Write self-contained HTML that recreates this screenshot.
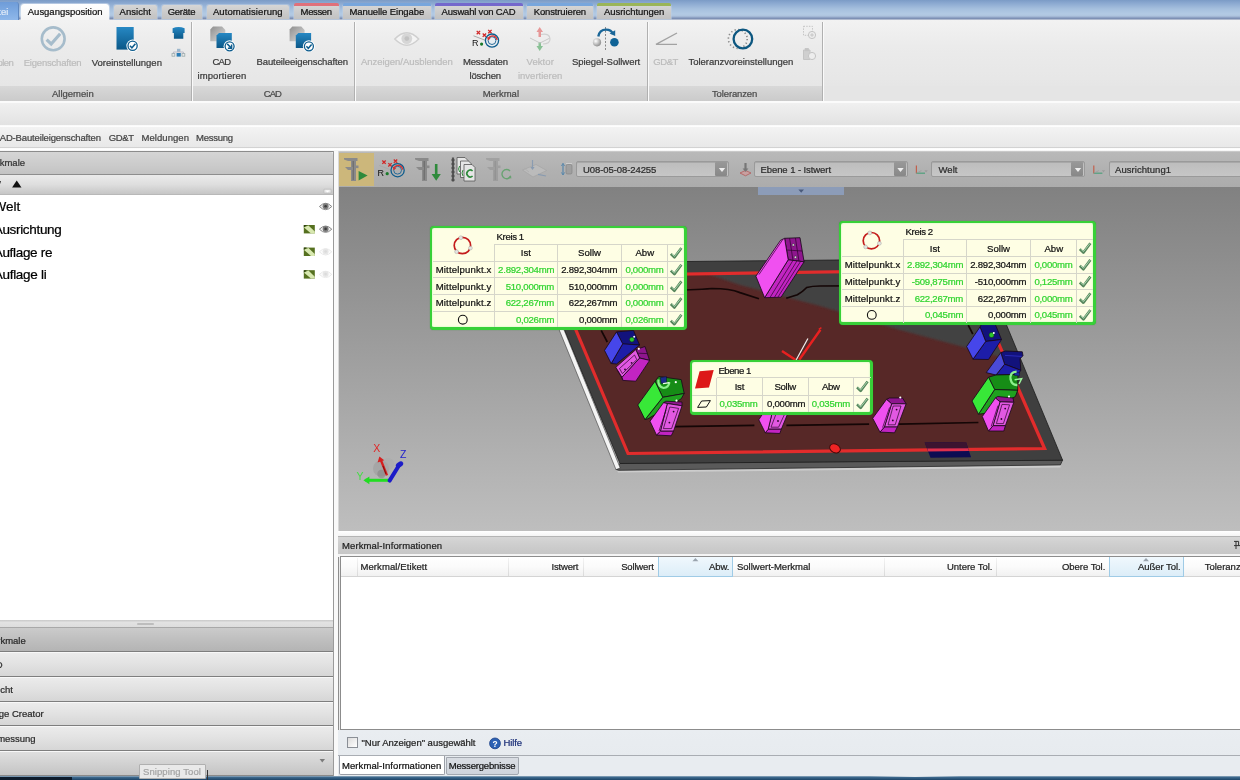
<!DOCTYPE html>
<html lang="de">
<head>
<meta charset="utf-8">
<title>Messung</title>
<style>
html,body{margin:0;padding:0;}
body{width:1240px;height:780px;overflow:hidden;position:relative;background:#ececec;font-family:"Liberation Sans","DejaVu Sans",sans-serif;font-size:9.5px;color:#222;}
.a{position:absolute;}
.t{position:absolute;white-space:nowrap;display:block;-webkit-text-stroke:.22px currentColor;}
#w{position:absolute;left:0;top:0;width:1240px;height:780px;overflow:hidden;opacity:.999;}
svg{position:absolute;left:0;top:0;overflow:visible;}
</style>
</head>
<body>
<div id="w">
<!-- p1_top -->
<div class="a" style="left:0px;top:0px;width:1240px;height:20px;background:linear-gradient(#7b9bc6 0,#8aa8d0 3px,#a6c0de 9px,#b2cae4 14px,#aec4de 16px,#8ea2c4 17.5px,#7d90b4 18.5px,#c9cfdb 20px);"></div>
<div class="a" style="left:0px;top:2px;width:18px;height:18px;background:linear-gradient(#6e9cd8,#7eaae2 50%,#8fb8ea);border-radius:0 3px 0 0;border-right:1px solid #5f88c0;"></div>
<span class="t" style="left:-14.2px;top:6.8px;font-size:9.5px;line-height:9.5px;letter-spacing:0.11px;color:#dfeaf8;">Datei</span>
<div class="a" style="left:21px;top:4px;width:88px;height:17px;background:linear-gradient(#ffffff,#f4f4f4);border-radius:3px 3px 0 0;box-shadow:0 0 0 1px rgba(255,255,255,.35);"></div>
<span class="t" style="left:27.8px;top:6.8px;font-size:9.5px;line-height:9.5px;letter-spacing:-0.02px;color:#111;">Ausgangsposition</span>
<div class="a" style="left:114px;top:5px;width:43px;height:14px;background:linear-gradient(#d6d6d6,#c9c9c9 60%,#c2c2c2);border-radius:2px 2px 0 0;box-shadow:0 0 0 1px rgba(190,205,225,.55);"></div>
<span class="t" style="left:119.6px;top:6.8px;font-size:9.5px;line-height:9.5px;letter-spacing:0.04px;color:#111;">Ansicht</span>
<div class="a" style="left:162px;top:5px;width:40px;height:14px;background:linear-gradient(#d6d6d6,#c9c9c9 60%,#c2c2c2);border-radius:2px 2px 0 0;box-shadow:0 0 0 1px rgba(190,205,225,.55);"></div>
<span class="t" style="left:167.7px;top:6.8px;font-size:9.5px;line-height:9.5px;letter-spacing:-0.25px;color:#111;">Geräte</span>
<div class="a" style="left:207px;top:5px;width:82px;height:14px;background:linear-gradient(#d6d6d6,#c9c9c9 60%,#c2c2c2);border-radius:2px 2px 0 0;box-shadow:0 0 0 1px rgba(190,205,225,.55);"></div>
<span class="t" style="left:212.9px;top:6.8px;font-size:9.5px;line-height:9.5px;letter-spacing:0.08px;color:#111;">Automatisierung</span>
<div class="a" style="left:294px;top:5px;width:45px;height:14px;background:linear-gradient(#d6d6d6,#c9c9c9 60%,#c2c2c2);border-radius:2px 2px 0 0;box-shadow:0 0 0 1px rgba(190,205,225,.55);"></div>
<div class="a" style="left:294px;top:3px;width:45px;height:2.5px;background:#e0707a;border-radius:2px 2px 0 0;"></div>
<span class="t" style="left:300.6px;top:6.8px;font-size:9.5px;line-height:9.5px;letter-spacing:-0.37px;color:#111;">Messen</span>
<div class="a" style="left:343px;top:5px;width:88px;height:14px;background:linear-gradient(#d6d6d6,#c9c9c9 60%,#c2c2c2);border-radius:2px 2px 0 0;box-shadow:0 0 0 1px rgba(190,205,225,.55);"></div>
<div class="a" style="left:343px;top:3px;width:88px;height:2.5px;background:#78a6dc;border-radius:2px 2px 0 0;"></div>
<span class="t" style="left:349.4px;top:6.8px;font-size:9.5px;line-height:9.5px;letter-spacing:-0.08px;color:#111;">Manuelle Eingabe</span>
<div class="a" style="left:435px;top:5px;width:88px;height:14px;background:linear-gradient(#d6d6d6,#c9c9c9 60%,#c2c2c2);border-radius:2px 2px 0 0;box-shadow:0 0 0 1px rgba(190,205,225,.55);"></div>
<div class="a" style="left:435px;top:3px;width:88px;height:2.5px;background:#7468cc;border-radius:2px 2px 0 0;"></div>
<span class="t" style="left:441.6px;top:6.8px;font-size:9.5px;line-height:9.5px;letter-spacing:-0.19px;color:#111;">Auswahl von CAD</span>
<div class="a" style="left:527px;top:5px;width:66px;height:14px;background:linear-gradient(#d6d6d6,#c9c9c9 60%,#c2c2c2);border-radius:2px 2px 0 0;box-shadow:0 0 0 1px rgba(190,205,225,.55);"></div>
<div class="a" style="left:527px;top:3px;width:66px;height:2.5px;background:#78a6dc;border-radius:2px 2px 0 0;"></div>
<span class="t" style="left:533.7px;top:6.8px;font-size:9.5px;line-height:9.5px;letter-spacing:-0.13px;color:#111;">Konstruieren</span>
<div class="a" style="left:597px;top:5px;width:74px;height:14px;background:linear-gradient(#d6d6d6,#c9c9c9 60%,#c2c2c2);border-radius:2px 2px 0 0;box-shadow:0 0 0 1px rgba(190,205,225,.55);"></div>
<div class="a" style="left:597px;top:3px;width:74px;height:2.5px;background:#9ab558;border-radius:2px 2px 0 0;"></div>
<span class="t" style="left:603.9px;top:6.8px;font-size:9.5px;line-height:9.5px;letter-spacing:-0.02px;color:#111;">Ausrichtungen</span>
<div class="a" style="left:0px;top:20px;width:1240px;height:66px;background:linear-gradient(#f2f2f2,#ebebeb 40%,#e6e6e6);"></div>
<div class="a" style="left:0px;top:86px;width:823px;height:15px;background:linear-gradient(#d8d8d8,#d0d0d0 60%,#cbcbcb);"></div>
<div class="a" style="left:823px;top:86px;width:417px;height:15px;background:#e5e5e5;"></div>
<div class="a" style="left:191px;top:22px;width:1px;height:79px;background:#b0b0b0;box-shadow:1px 0 0 #fafafa;"></div>
<div class="a" style="left:354px;top:22px;width:1px;height:79px;background:#b0b0b0;box-shadow:1px 0 0 #fafafa;"></div>
<div class="a" style="left:647px;top:22px;width:1px;height:79px;background:#b0b0b0;box-shadow:1px 0 0 #fafafa;"></div>
<div class="a" style="left:822px;top:22px;width:1px;height:79px;background:#b0b0b0;box-shadow:1px 0 0 #fafafa;"></div>
<span class="t" style="left:51.9px;top:89.3px;font-size:9.5px;line-height:9.5px;letter-spacing:0.02px;color:#4a4a4a;">Allgemein</span>
<span class="t" style="left:263.7px;top:89.3px;font-size:9.5px;line-height:9.5px;letter-spacing:-0.88px;color:#4a4a4a;">CAD</span>
<span class="t" style="left:482.7px;top:89.3px;font-size:9.5px;line-height:9.5px;letter-spacing:-0.02px;color:#4a4a4a;">Merkmal</span>
<span class="t" style="left:712.0px;top:89.3px;font-size:9.5px;line-height:9.5px;letter-spacing:-0.13px;color:#4a4a4a;">Toleranzen</span>
<span class="t" style="left:-34.0px;top:57.6px;font-size:9.5px;line-height:9.5px;letter-spacing:-0.56px;color:#bcbcbc;">Wiederholen</span>
<span class="t" style="left:23.7px;top:57.6px;font-size:9.5px;line-height:9.5px;letter-spacing:-0.20px;color:#bcbcbc;">Eigenschaften</span>
<span class="t" style="left:91.7px;top:57.6px;font-size:9.5px;line-height:9.5px;letter-spacing:0.00px;color:#3a3a3a;">Voreinstellungen</span>
<span class="t" style="left:212.4px;top:57.3px;font-size:9.5px;line-height:9.5px;letter-spacing:-0.73px;color:#3a3a3a;">CAD</span>
<span class="t" style="left:197.4px;top:70.5px;font-size:9.5px;line-height:9.5px;letter-spacing:0.14px;color:#3a3a3a;">importieren</span>
<span class="t" style="left:256.5px;top:57.3px;font-size:9.5px;line-height:9.5px;letter-spacing:-0.10px;color:#3a3a3a;">Bauteileeigenschaften</span>
<span class="t" style="left:361.0px;top:57.3px;font-size:9.5px;line-height:9.5px;letter-spacing:-0.03px;color:#bcbcbc;">Anzeigen/Ausblenden</span>
<span class="t" style="left:462.9px;top:57.3px;font-size:9.5px;line-height:9.5px;letter-spacing:-0.17px;color:#3a3a3a;">Messdaten</span>
<span class="t" style="left:469.5px;top:70.5px;font-size:9.5px;line-height:9.5px;letter-spacing:-0.21px;color:#3a3a3a;">löschen</span>
<span class="t" style="left:526.5px;top:57.3px;font-size:9.5px;line-height:9.5px;letter-spacing:0.09px;color:#bcbcbc;">Vektor</span>
<span class="t" style="left:518.0px;top:70.5px;font-size:9.5px;line-height:9.5px;letter-spacing:-0.01px;color:#bcbcbc;">invertieren</span>
<span class="t" style="left:571.9px;top:57.3px;font-size:9.5px;line-height:9.5px;letter-spacing:-0.02px;color:#3a3a3a;">Spiegel-Sollwert</span>
<span class="t" style="left:653.2px;top:57.3px;font-size:9.5px;line-height:9.5px;letter-spacing:-0.40px;color:#bcbcbc;">GD&amp;T</span>
<span class="t" style="left:688.4px;top:57.3px;font-size:9.5px;line-height:9.5px;letter-spacing:-0.01px;color:#3a3a3a;">Toleranzvoreinstellungen</span>
<div class="a" style="left:0px;top:101px;width:1240px;height:1.6px;background:#fbfbfb;"></div>
<div class="a" style="left:0px;top:102.6px;width:1240px;height:22px;background:linear-gradient(#f0f0f0,#e8e8e8 60%,#e2e2e2);"></div>
<div class="a" style="left:0px;top:124.5px;width:1240px;height:2px;background:linear-gradient(#f8f8f8,#ffffff);"></div>
<div class="a" style="left:0px;top:126.5px;width:1240px;height:21px;background:linear-gradient(#f3f3f3,#ececec 60%,#e8e8e8);"></div>
<div class="a" style="left:0px;top:147px;width:1240px;height:1px;background:#d2d2d2;"></div>
<div class="a" style="left:0px;top:148px;width:1240px;height:3px;background:linear-gradient(#fafafa,#ffffff 50%,#f2f2f2);"></div>
<span class="t" style="left:-7.0px;top:133.2px;font-size:9.5px;line-height:9.5px;letter-spacing:-0.15px;color:#444;">CAD-Bauteileigenschaften</span>
<span class="t" style="left:108.7px;top:133.2px;font-size:9.5px;line-height:9.5px;letter-spacing:-0.36px;color:#444;">GD&amp;T</span>
<span class="t" style="left:141.5px;top:133.2px;font-size:9.5px;line-height:9.5px;letter-spacing:0.06px;color:#444;">Meldungen</span>
<span class="t" style="left:196.0px;top:133.2px;font-size:9.5px;line-height:9.5px;letter-spacing:-0.26px;color:#444;">Messung</span>
<!-- p2_icons -->
<svg width="1240" height="110" viewBox="0 0 1240 110">
<defs>
<linearGradient id="gb" x1="0" y1="0" x2="0" y2="1"><stop offset="0" stop-color="#2688c4"/><stop offset="1" stop-color="#0b5888"/></linearGradient>
<linearGradient id="gg" x1="0" y1="0" x2="1" y2="1"><stop offset="0" stop-color="#8e8e8e"/><stop offset="1" stop-color="#dedede"/></linearGradient>
<radialGradient id="gs" cx=".35" cy=".35" r=".7"><stop offset="0" stop-color="#ffffff"/><stop offset="1" stop-color="#8c8c8c"/></radialGradient>
</defs>
<circle cx="53.2" cy="38.8" r="11.4" fill="none" stroke="#a6bccb" stroke-width="2.6"/>
<path d="M46.6 39.6 L51.2 44 L60.2 33.8" fill="none" stroke="#a6bccb" stroke-width="3.2"/>
<rect x="116.5" y="27" width="17.2" height="22.6" fill="url(#gb)"/>
<circle cx="132.6" cy="45.8" r="6.2" fill="#fff"/><circle cx="132.6" cy="45.8" r="4.6" fill="#fff" stroke="#0d5c8d" stroke-width="1.3"/>
<path d="M130 45.8 L131.9 47.8 L135.4 43.8" fill="none" stroke="#0d5c8d" stroke-width="1.5"/>
<path d="M172.6 28.2 Q178.5 26 184.6 28.2 L184.6 33 L183.3 33 L183.3 38.8 L173.9 38.8 L173.9 33 L172.6 33 Z" fill="url(#gb)"/>
<rect x="177" y="48.8" width="3.4" height="3" fill="#9db7cc"/><rect x="176.6" y="53" width="4.2" height="3.6" fill="#2b7db5"/><rect x="172" y="53.6" width="2.8" height="2.6" fill="none" stroke="#9aa" stroke-width=".8"/><rect x="182" y="53.6" width="2.8" height="2.6" fill="none" stroke="#9aa" stroke-width=".8"/><path d="M173.4 53.6V52H183.4V53.6" fill="none" stroke="#aab" stroke-width=".7"/>
<g transform="translate(0 0)"><path d="M213 26.6 H222 L225.3 30 V41.2 H210.3 V29.4Z" fill="url(#gg)"/><path d="M219 33 H231.8 V48 H216.5 V35.6Z" fill="url(#gb)"/><circle cx="229.6" cy="46.3" r="6" fill="#fff"/><circle cx="229.6" cy="46.3" r="4.5" fill="#fff" stroke="#0d5c8d" stroke-width="1.3"/><path d="M227.2 43.9 L231 47.7 M231.6 44.6 L231.6 48.3 L227.9 48.3" fill="none" stroke="#0d5c8d" stroke-width="1.5"/></g>
<g transform="translate(79.3 0)"><path d="M213 26.6 H222 L225.3 30 V41.2 H210.3 V29.4Z" fill="url(#gg)"/><path d="M219 33 H231.8 V48 H216.5 V35.6Z" fill="url(#gb)"/><circle cx="229.6" cy="46.3" r="6" fill="#fff"/><circle cx="229.6" cy="46.3" r="4.5" fill="#fff" stroke="#0d5c8d" stroke-width="1.3"/><path d="M227.1 46.3 L229 48.3 L232.3 44.4" fill="none" stroke="#0d5c8d" stroke-width="1.5"/></g>
<path d="M394.8 39 Q406.8 26.5 418.7 39 Q406.8 51.5 394.8 39Z" fill="#f4f4f4" stroke="#cfcfcf" stroke-width="1.4"/><circle cx="406.8" cy="38.6" r="5.4" fill="#d6d6d6"/><circle cx="406.8" cy="38.6" r="2.4" fill="#c2c2c2"/>
<g transform="translate(0 0)"><path d="M473.5 35.8 L485 40.2" stroke="#aaa" stroke-width="1"/><path d="M476.7 30.900000000000002L480.09999999999997 34.300000000000004M480.09999999999997 30.900000000000002L476.7 34.300000000000004" stroke="#d02828" stroke-width="1.3"/><path d="M482.7 33.5L486.09999999999997 36.900000000000006M486.09999999999997 33.5L482.7 36.900000000000006" stroke="#d02828" stroke-width="1.3"/><path d="M488.2 29.900000000000002L491.59999999999997 33.300000000000004M491.59999999999997 29.900000000000002L488.2 33.300000000000004" stroke="#d02828" stroke-width="1.3"/><text x="472" y="46" font-size="9" fill="#111" font-family="Liberation Sans,sans-serif">R</text><circle cx="481.6" cy="44.1" r="1.6" fill="#1a7a2a"/><circle cx="492" cy="40.6" r="6.6" fill="#e8eef2" stroke="#0d5c8d" stroke-width="1.3"/><circle cx="492" cy="40.6" r="3.9" fill="none" stroke="#2a6c98" stroke-width="1"/><path d="M488.2 38.6 Q490 35.6 493.2 35.8 Q496.6 36.4 497 40" fill="none" stroke="#d83030" stroke-width="1.3"/><path d="M487 37 L488 40.6 L490.6 38.6Z" fill="#d83030"/></g>
<g opacity=".55"><path d="M539.7 27 L536.5 32 L538.5 32 L538.5 37 L541 37 L541 32 L543 32Z" fill="#e05050"/><path d="M539.7 51 L536.5 46 L538.5 46 L538.5 42 L541 42 L541 46 L543 46Z" fill="#3aa050"/><path d="M530 38 L540 43 L550 38" fill="none" stroke="#aaa" stroke-width="1"/><path d="M541 34.5 Q550 33 550 39 Q550 44 543 44" fill="none" stroke="#b8b8b8" stroke-width="1.2"/></g>
<path d="M605.5 27 V51.5" stroke="#8a8a8a" stroke-width="1" stroke-dasharray="2 1.5"/><path d="M598.3 36.5 Q599.5 29.6 606 29.6 Q611.5 29.6 613 34" fill="none" stroke="#1a6698" stroke-width="2.4"/><path d="M609.6 33.4 L615.2 36 L615.2 30.2Z" fill="#1a6698"/><circle cx="597" cy="42.3" r="4.1" fill="url(#gs)"/><circle cx="614.4" cy="42.3" r="4.3" fill="#0f6396"/>
<path d="M677 33 L656 44.4 L677 44.4" fill="none" stroke="#a2a2a2" stroke-width="1.4"/>
<circle cx="737.8" cy="39" r="9.4" fill="none" stroke="#8a8a8a" stroke-width="1.6" stroke-dasharray="1.3 2.4"/><circle cx="742.9" cy="39" r="9.3" fill="none" stroke="#0d5780" stroke-width="2.3"/>
<g fill="none" stroke="#c4c4c4" stroke-width="1"><rect x="803.5" y="26.3" width="9" height="9" stroke-dasharray="1.5 1.2"/><circle cx="812" cy="35" r="3.6" fill="#ededed"/><path d="M810.2 35H813.8M812 33.2V36.8"/><path d="M803.5 50 H810 V59.5 H803.5Z" fill="#cfcfcf"/><rect x="805.3" y="48.6" width="3" height="2" fill="#c4c4c4"/><circle cx="812" cy="56" r="3.6" fill="#ededed"/></g>
</svg>
<!-- p3_left -->
<div class="a" style="left:0px;top:150.5px;width:333px;height:1px;background:#8c8c8c;"></div>
<div class="a" style="left:0px;top:151.5px;width:333px;height:22px;background:linear-gradient(#d5d5d5,#cbcbcb 60%,#c3c3c3);border-radius:0 3px 0 0;"></div>
<div class="a" style="left:333px;top:151px;width:1px;height:625px;background:#9a9a9a;"></div>
<div class="a" style="left:334px;top:151px;width:4px;height:625px;background:#f9f9f9;"></div>
<div class="a" style="left:0px;top:173.5px;width:333px;height:1px;background:#8e8e8e;"></div>
<span class="t" style="left:-16.5px;top:158.0px;font-size:9.5px;line-height:9.5px;letter-spacing:-0.03px;color:#333;">Merkmale</span>
<div class="a" style="left:0px;top:174.5px;width:333px;height:19px;background:linear-gradient(#ebebeb,#dedede 50%,#c6c6c6);"></div>
<div class="a" style="left:0px;top:193.5px;width:333px;height:1px;background:#b8b8b8;"></div>
<div class="a" style="left:0px;top:194.5px;width:333px;height:425px;background:#ffffff;"></div>
<span class="t" style="left:-6.5px;top:200.4px;font-size:13.5px;line-height:13.5px;letter-spacing:0.00px;color:#000;">Welt</span>
<span class="t" style="left:-6.3px;top:223.2px;font-size:13.5px;line-height:13.5px;letter-spacing:-0.32px;color:#000;">Ausrichtung</span>
<span class="t" style="left:-6.3px;top:246.0px;font-size:13.5px;line-height:13.5px;letter-spacing:-0.31px;color:#000;">Auflage re</span>
<span class="t" style="left:-6.3px;top:267.9px;font-size:13.5px;line-height:13.5px;letter-spacing:-0.28px;color:#000;">Auflage li</span>
<div class="a" style="left:0px;top:619.5px;width:333px;height:8px;background:linear-gradient(#c8c8c8,#e2e2e2 30%,#dcdcdc);"></div>
<div class="a" style="left:137px;top:623px;width:17px;height:2px;background:#bdbdbd;border-radius:1px;"></div>
<div class="a" style="left:0px;top:627.4px;width:333px;height:24px;background:linear-gradient(#cbcbcb,#bfbfbf 50%,#b4b4b4);border-top:1px solid #a8a8a8;box-sizing:border-box;"></div>
<div class="a" style="left:0px;top:651.3px;width:333px;height:24.6px;background:linear-gradient(#ececec,#e2e2e2 50%,#d6d6d6);border-top:1px solid #7e7e7e;box-sizing:border-box;box-shadow:inset 0 1px 0 #f8f8f8;"></div>
<div class="a" style="left:0px;top:676px;width:333px;height:24.6px;background:linear-gradient(#ececec,#e2e2e2 50%,#d6d6d6);border-top:1px solid #7e7e7e;box-sizing:border-box;box-shadow:inset 0 1px 0 #f8f8f8;"></div>
<div class="a" style="left:0px;top:700.6px;width:333px;height:24.6px;background:linear-gradient(#ececec,#e2e2e2 50%,#d6d6d6);border-top:1px solid #7e7e7e;box-sizing:border-box;box-shadow:inset 0 1px 0 #f8f8f8;"></div>
<div class="a" style="left:0px;top:725.3px;width:333px;height:24.6px;background:linear-gradient(#ececec,#e2e2e2 50%,#d6d6d6);border-top:1px solid #7e7e7e;box-sizing:border-box;box-shadow:inset 0 1px 0 #f8f8f8;"></div>
<div class="a" style="left:0px;top:750px;width:333px;height:24.6px;background:linear-gradient(#e0e0e0,#d2d2d2 50%,#c4c4c4);border-top:1px solid #7e7e7e;box-sizing:border-box;box-shadow:inset 0 1px 0 #f8f8f8;"></div>
<div class="a" style="left:0px;top:774.5px;width:333px;height:1.5px;background:#8a8a8a;"></div>
<span class="t" style="left:-15.8px;top:635.9px;font-size:9.5px;line-height:9.5px;letter-spacing:-0.03px;color:#2a2a2a;">Merkmale</span>
<span class="t" style="left:-15.0px;top:660.2px;font-size:9.5px;line-height:9.5px;letter-spacing:-1.23px;color:#2a2a2a;">CAD</span>
<span class="t" style="left:-18.0px;top:684.8px;font-size:9.5px;line-height:9.5px;letter-spacing:-0.03px;color:#2a2a2a;">Ansicht</span>
<span class="t" style="left:-17.0px;top:709.4px;font-size:9.5px;line-height:9.5px;letter-spacing:-0.01px;color:#2a2a2a;">Image Creator</span>
<span class="t" style="left:-17.0px;top:734.0px;font-size:9.5px;line-height:9.5px;letter-spacing:-0.04px;color:#2a2a2a;">Vermessung</span>
<div class="a" style="left:138.5px;top:764px;width:67.5px;height:15.4px;z-index:5;background:#e9e9e9;border:1px solid #b0b0b0;box-sizing:border-box;border-radius:1px;"></div>
<span class="t" style="left:143.0px;top:766.8px;font-size:9.5px;line-height:9.5px;letter-spacing:0.09px;color:#a4a4a4;z-index:6;">Snipping Tool</span>
<div class="a" style="left:206.6px;top:769.5px;width:1.2px;height:10.5px;background:#333;z-index:6;"></div>
<svg width="340" height="780" viewBox="0 0 340 780">
<path d="M12.1 187.4 L16.7 180.5 L21.5 187.4Z" fill="#111"/><path d="M-0.5 181 L1 181 L0.2 184Z" fill="#333"/>
<path d="M324 189.2 H331 V193 H324Z" fill="#e8e8e8" stroke="#b5b5b5" stroke-width=".6"/><path d="M325.4 190.4 H329.6 L327.5 192.4Z" fill="#fff"/>
<g opacity="1"><path d="M319.40000000000003 206.5 Q325.6 200.1 331.8 206.5 Q325.6 212.9 319.40000000000003 206.5Z" fill="#f2f2f2" stroke="#8a8a8a" stroke-width="1"/><circle cx="325.6" cy="206.2" r="3" fill="#7c7c7c"/><circle cx="325.6" cy="206.2" r="1.3" fill="#3c3c3c"/></g>
<g opacity="1"><path d="M319.40000000000003 229.2 Q325.6 222.79999999999998 331.8 229.2 Q325.6 235.6 319.40000000000003 229.2Z" fill="#f2f2f2" stroke="#8a8a8a" stroke-width="1"/><circle cx="325.6" cy="228.89999999999998" r="3" fill="#7c7c7c"/><circle cx="325.6" cy="228.89999999999998" r="1.3" fill="#3c3c3c"/></g>
<g opacity="0.18"><path d="M319.40000000000003 251.8 Q325.6 245.4 331.8 251.8 Q325.6 258.2 319.40000000000003 251.8Z" fill="#f2f2f2" stroke="#8a8a8a" stroke-width="1"/><circle cx="325.6" cy="251.5" r="3" fill="#7c7c7c"/><circle cx="325.6" cy="251.5" r="1.3" fill="#3c3c3c"/></g>
<g opacity="0.18"><path d="M319.40000000000003 274.4 Q325.6 268.0 331.8 274.4 Q325.6 280.79999999999995 319.40000000000003 274.4Z" fill="#f2f2f2" stroke="#8a8a8a" stroke-width="1"/><circle cx="325.6" cy="274.09999999999997" r="3" fill="#7c7c7c"/><circle cx="325.6" cy="274.09999999999997" r="1.3" fill="#3c3c3c"/></g>
<rect x="303.8" y="225" width="11" height="8.4" fill="#55701f"/><path d="M303.8 227.2 L308.5 225.4 L314.8 231.5 L314.8 233.4 L311 233.4Z" fill="#d8e8b0"/><path d="M303.8 225 h3 l-3 2.5z" fill="#2e4210"/>
<rect x="303.8" y="247.6" width="11" height="8.4" fill="#55701f"/><path d="M303.8 249.79999999999998 L308.5 248.0 L314.8 254.1 L314.8 256.0 L311 256.0Z" fill="#d8e8b0"/><path d="M303.8 247.6 h3 l-3 2.5z" fill="#2e4210"/>
<rect x="303.8" y="270.2" width="11" height="8.4" fill="#55701f"/><path d="M303.8 272.4 L308.5 270.59999999999997 L314.8 276.7 L314.8 278.59999999999997 L311 278.59999999999997Z" fill="#d8e8b0"/><path d="M303.8 270.2 h3 l-3 2.5z" fill="#2e4210"/>
<path d="M319.6 759 H325 L322.3 762.4Z" fill="#7a7a7a"/>
</svg>
<!-- p4_view -->
<div class="a" style="left:338px;top:151px;width:902px;height:1px;background:#c9c9c9;"></div>
<div class="a" style="left:338px;top:152px;width:902px;height:34.5px;background:linear-gradient(#b9b9b9,#b1b1b1 50%,#acacac);"></div>
<div class="a" style="left:338px;top:151px;width:1px;height:380px;background:#d8d8d8;"></div>
<div class="a" style="left:339px;top:152.5px;width:35px;height:33.5px;background:#ccb77b;"></div>
<div class="a" style="left:339px;top:186.5px;width:901px;height:344px;background:linear-gradient(#818181 0,#8d8d8d 20%,#9f9f9f 50%,#b2b2b2 80%,#bebebe 100%);"></div>
<div class="a" style="left:338px;top:530.5px;width:902px;height:5.5px;background:linear-gradient(#ffffff,#f4f4f4);"></div>
<div class="a" style="left:576px;top:160.6px;width:152.70000000000005px;height:16.8px;box-sizing:border-box;background:linear-gradient(#bdbdbd,#c6c6c6);border:1px solid #9a9a9a;border-radius:2px;box-shadow:inset 0 1px 0 #a8a8a8;"></div>
<div class="a" style="left:715.1px;top:162.2px;width:12px;height:13.4px;background:linear-gradient(#989898,#888888);border-radius:1px;"></div>
<div class="a" style="left:754px;top:160.6px;width:153.5px;height:16.8px;box-sizing:border-box;background:linear-gradient(#bdbdbd,#c6c6c6);border:1px solid #9a9a9a;border-radius:2px;box-shadow:inset 0 1px 0 #a8a8a8;"></div>
<div class="a" style="left:893.9px;top:162.2px;width:12px;height:13.4px;background:linear-gradient(#989898,#888888);border-radius:1px;"></div>
<div class="a" style="left:931px;top:160.6px;width:154px;height:16.8px;box-sizing:border-box;background:linear-gradient(#bdbdbd,#c6c6c6);border:1px solid #9a9a9a;border-radius:2px;box-shadow:inset 0 1px 0 #a8a8a8;"></div>
<div class="a" style="left:1071.4px;top:162.2px;width:12px;height:13.4px;background:linear-gradient(#989898,#888888);border-radius:1px;"></div>
<div class="a" style="left:1108.5px;top:160.6px;width:137.5px;height:16.8px;box-sizing:border-box;background:linear-gradient(#bdbdbd,#c6c6c6);border:1px solid #9a9a9a;border-radius:2px;box-shadow:inset 0 1px 0 #a8a8a8;"></div>
<span class="t" style="left:583.0px;top:164.8px;font-size:9.5px;line-height:9.5px;letter-spacing:-0.08px;color:#2c2c2c;">U08-05-08-24255</span>
<span class="t" style="left:760.5px;top:164.8px;font-size:9.5px;line-height:9.5px;letter-spacing:-0.08px;color:#2c2c2c;">Ebene 1 - Istwert</span>
<span class="t" style="left:938.5px;top:164.8px;font-size:9.5px;line-height:9.5px;letter-spacing:0.06px;color:#2c2c2c;">Welt</span>
<span class="t" style="left:1115.0px;top:164.8px;font-size:9.5px;line-height:9.5px;letter-spacing:0.05px;color:#2c2c2c;">Ausrichtung1</span>
<div class="a" style="left:757.5px;top:186.5px;width:86.5px;height:8.5px;background:#8c9cb8;"></div>
<svg width="1240" height="780" viewBox="0 0 1240 780">
<defs><clipPath id="vp"><rect x="339" y="186.5" width="901" height="344"/></clipPath></defs>
<g clip-path="url(#vp)">
<filter id="bl" x="-5%" y="-20%" width="110%" height="140%"><feGaussianBlur stdDeviation="1.1"/></filter>
<clipPath id="inner"><path d="M553.2 276 L966.5 270 L1044.6 448.5 L628 453.5Z"/></clipPath>
<path d="M617 470.4 L1060.6 465 L1060.6 467.4 L618 472.6Z" fill="#d2d2d2" opacity=".8"/>
<path d="M620 463.2 L1062.6 460 L1060.4 464.9 L618.6 470.3 L616 469.4Z" fill="#5a5a5a" stroke="#2a2a2a" stroke-width=".8"/>
<path d="M536.5 263 L979.5 258.6 L1006.5 325 L1062.6 460.2 L620 463.5Z" fill="#3f3f3f" stroke="#1c1c1c" stroke-width=".8"/>
<path d="M532 263 L536.8 263 L620.2 468 L616 469.6Z" fill="#f4f4f4" stroke="#222" stroke-width=".5"/>
<path d="M553.2 276 L966.5 270 L1044.6 448.5 L628 453.5Z" fill="#572827"/>
<g clip-path="url(#inner)"><path d="M705 273 L740 285 L820 306 L900 330 L970 348.8 L1010 359.5 L1010 262 L705 262Z" fill="#424242" filter="url(#bl)"/></g>
<path d="M553.2 276 L966.5 270 L1044.6 448.5 L628 453.5Z" fill="none" stroke="#e22c2c" stroke-width="3.2" stroke-linejoin="miter"/>
<path d="M601.2 330.4 L607.3 342" stroke="#140606" stroke-width="1.7" fill="none"/><path d="M640 290 Q690 290.5 712 288.5 Q730 288.5 740 292.6 L759 298.8" stroke="#140606" stroke-width="1.7" fill="none"/><path d="M786.2 298.3 L797.4 294.7 Q803 291.5 806.7 287.5 Q812 286 820 286 L900 285.6" stroke="#140606" stroke-width="1.7" fill="none"/><path d="M675 426.6 L754.4 425.3 M786.4 425.3 L869.1 424.1 M898.9 424.1 L978.4 422.5" stroke="#140606" stroke-width="1.7" fill="none"/><path d="M968.2 325 L972.8 334.2" stroke="#140606" stroke-width="1.7" fill="none"/>
<path d="M924.7 442.5 L966 442.1 L971.1 457.3 L930.5 457.8Z" fill="#0c0c52"/><path d="M924.7 442.5 L966 442.1 L968.2 448.6 L927.2 449Z" fill="#3c1430"/><path d="M927.2 448.6 L968 448.2 L969 451 L928.2 451.5Z" fill="#e0304c"/>
<ellipse cx="835" cy="448.4" rx="5.6" ry="4.3" fill="#ee2424" stroke="#3a0a0a" stroke-width=".9" transform="rotate(28 835 448.4)"/>
<path d="M782 351 L795.4 359.8 M799.2 359.8 L820.4 329.8" stroke="#e82020" stroke-width="2.4" fill="none"/><path d="M795.6 361 L807.9 338.5" stroke="#f2f2f2" stroke-width="1.2"/><path d="M818.8 329.4 l2.6 -1.8" stroke="#e82020" stroke-width="1.4"/>
<path d="M784.6 238.3 L800 237.7 L804.1 261.8 L788.2 259.8Z" fill="#8e168e" stroke="#160816" stroke-width=".8" stroke-linejoin="round"/><path d="M788.2 259.8 L804.1 261.8 L781 297.2 L764.6 297.7Z" fill="#c224c2" stroke="#160816" stroke-width=".8" stroke-linejoin="round"/><path d="M755.9 276.2 L780.5 240.3 L784.6 238.3 L788.2 259.8 L764.6 297.7Z" fill="#f050f0" stroke="#160816" stroke-width=".8" stroke-linejoin="round"/><path d="M793 260.4 L770 297.5 M797 260.9 L774.4 297.4 M800.6 261.4 L777.8 297.3 M783 239.2 L759 274.5 M789.6 238.2 L793 260.4 M795.4 238 L799 261.2 M786.6 250 L802.2 251" stroke="#2a062a" stroke-width=".7" fill="none"/><circle cx="793.3" cy="244.9" r="1.2" fill="#e8d8e8" stroke="#222" stroke-width=".5"/><circle cx="795.4" cy="257.2" r="1.2" fill="#e8d8e8" stroke="#222" stroke-width=".5"/>
<path d="M616.5 331.9 L633.5 330.4 L639.6 345 L622.7 344.2Z" fill="#12127c" stroke="#160816" stroke-width=".8" stroke-linejoin="round"/><path d="M622.7 343.8 L639.6 345 L633.5 350 L616.5 364 L611.2 363.5Z" fill="#1d1da8" stroke="#160816" stroke-width=".8" stroke-linejoin="round"/><path d="M604.5 350.4 L616.5 331.9 L622.7 343.8 L611.2 363.5Z" fill="#4646ea" stroke="#160816" stroke-width=".8" stroke-linejoin="round"/><circle cx="631.9" cy="339.6" r="2.4" fill="#2cc42c" stroke="#0a3a0a" stroke-width=".5"/><circle cx="634.2" cy="336.7" r="1" fill="#fff"/><path d="M635.8 349.6 L645 346.5 L649.6 360.4 L639.6 358Z" fill="#8e168e" stroke="#160816" stroke-width=".8" stroke-linejoin="round"/><path d="M639.6 358 L649.6 360.4 L635.8 381.2 L622.7 380.4 L621.9 377.3Z" fill="#c224c2" stroke="#160816" stroke-width=".8" stroke-linejoin="round"/><path d="M615.8 367.3 L635.8 349.6 L639.6 358 L621.9 377.3Z" fill="#e258e2" stroke="#160816" stroke-width=".8" stroke-linejoin="round"/><path d="M619.5 368.5 L634.5 355 L636.8 359.6 L622.4 373.6Z M617 370 L623 379.6 M637.5 353.2 L647.4 353.6" fill="none" stroke="#2a062a" stroke-width=".7"/><circle cx="625" cy="369.4" r=".9" fill="#2a062a"/><circle cx="631.6" cy="362.8" r=".9" fill="#2a062a"/><circle cx="638.8" cy="348.8" r="1.1" fill="#fff"/>
<path d="M655 381.2 L658.8 376.5 L681.2 379.6 L684.2 393.5 L662.7 397.3Z" fill="#168c16" stroke="#160816" stroke-width=".8" stroke-linejoin="round"/><path d="M662.7 397.3 L684.2 393.5 L681.2 398.8 L648 418.8 L645 419.6Z" fill="#1fa21f" stroke="#160816" stroke-width=".8" stroke-linejoin="round"/><path d="M637.8 405 L655 381.2 L662.7 397.3 L645 419.6Z" fill="#38e838" stroke="#160816" stroke-width=".8" stroke-linejoin="round"/><path d="M660.4 377.6 L666.5 376.6 L666.5 382.6 L661.2 383.4Z" fill="#1c2c8c" stroke="#0a0a2a" stroke-width=".5"/><path d="M658.4 379.5 Q657.6 386.5 663.6 388 Q668.6 387.6 669.4 382.4" fill="none" stroke="#8cf08c" stroke-width="2.2"/><path d="M663 383.6 L669.6 382.6" stroke="#eaffea" stroke-width="1.2"/><circle cx="675.8" cy="382.2" r="1.1" fill="#fff"/><path d="M663.5 402.7 L665.8 401.2 L682 402 L682 405.8 L667.3 403.5Z" fill="#8e168e" stroke="#160816" stroke-width=".8" stroke-linejoin="round"/><path d="M667.3 403.5 L682 405.8 L673.5 431.2 L660.4 431.2Z" fill="#e258e2" stroke="#160816" stroke-width=".8" stroke-linejoin="round"/><path d="M660.4 431.2 L673.5 431.2 L671.2 435.8 L656.5 435Z" fill="#c224c2" stroke="#160816" stroke-width=".8" stroke-linejoin="round"/><path d="M650 421.2 L663.5 402.7 L667.3 403.5 L660.4 431.2 L656.5 435Z" fill="#f050f0" stroke="#160816" stroke-width=".8" stroke-linejoin="round"/><path d="M669.8 407 L678.6 408.4 L671.6 428.6 L663.4 428.6Z M666 410 L659 431" fill="none" stroke="#2a062a" stroke-width=".7"/><circle cx="673.6" cy="411.6" r=".9" fill="#2a062a"/><circle cx="669.4" cy="422.6" r=".9" fill="#2a062a"/><circle cx="676.5" cy="400.7" r="1.1" fill="#fff"/>
<path d="M772.6 411 L788.4 412 L781.3 429.2 L768.2 429.2Z" fill="#e258e2" stroke="#160816" stroke-width=".8" stroke-linejoin="round"/><path d="M768.2 429.2 L781.3 429.2 L779.8 433.5 L765.3 432.8Z" fill="#c224c2" stroke="#160816" stroke-width=".8" stroke-linejoin="round"/><path d="M758.8 419.8 L764.5 411 L772.6 411 L768.2 429.2 L765.3 432.8Z" fill="#f050f0" stroke="#160816" stroke-width=".8" stroke-linejoin="round"/><path d="M776 414 L784.4 414.6 L778.6 427.2 L771 427.2Z" fill="none" stroke="#2a062a" stroke-width=".7"/><circle cx="778" cy="421" r=".9" fill="#2a062a"/>
<path d="M886.5 399.4 L889.4 398 L902.5 398 L906.1 403.8 L891.6 403.8Z" fill="#8e168e" stroke="#160816" stroke-width=".8" stroke-linejoin="round"/><path d="M891.6 403.8 L906.1 403.8 L897.4 427 L884.4 427Z" fill="#e258e2" stroke="#160816" stroke-width=".8" stroke-linejoin="round"/><path d="M884.4 427 L897.4 427 L894.5 432.8 L880 432.1Z" fill="#c224c2" stroke="#160816" stroke-width=".8" stroke-linejoin="round"/><path d="M872.7 418.3 L886.5 399.4 L891.6 403.8 L884.4 427 L880 432.1Z" fill="#f050f0" stroke="#160816" stroke-width=".8" stroke-linejoin="round"/><path d="M893.2 406 L901 406 L895.2 424.8 L888 424.8Z M889.6 407.4 L882.6 427.6" fill="none" stroke="#2a062a" stroke-width=".7"/><circle cx="896.6" cy="409.6" r=".9" fill="#2a062a"/><circle cx="892.8" cy="420.4" r=".9" fill="#2a062a"/><circle cx="900.3" cy="397.5" r="1.1" fill="#fff"/>
<path d="M980 327 L981.5 324 L995 324 L996.2 326.5 L1001.5 339.5 L985.7 341.4Z" fill="#12127c" stroke="#160816" stroke-width=".8" stroke-linejoin="round"/><path d="M985.7 341.4 L1001.5 339.5 L988.5 359.5 L973 359.2Z" fill="#1d1da8" stroke="#160816" stroke-width=".8" stroke-linejoin="round"/><path d="M966.6 346.5 L980 327 L985.7 341.4 L973 359.2Z" fill="#4646ea" stroke="#160816" stroke-width=".8" stroke-linejoin="round"/><circle cx="991.5" cy="335" r="2.5" fill="#2cc42c" stroke="#0a3a0a" stroke-width=".5"/><circle cx="993.8" cy="333" r="1" fill="#fff"/><path d="M1000.8 352.6 L1005.4 351 L1022.3 351.8 L1023 355.7 L1020 358.8 L1020.8 370.3 L1004.6 364.2Z" fill="#12127c" stroke="#160816" stroke-width=".8" stroke-linejoin="round"/><path d="M1004.6 364.2 L1020.8 370.3 L1018 374.4 L996 375Z" fill="#1d1da8" stroke="#160816" stroke-width=".8" stroke-linejoin="round"/><path d="M986.2 372.6 L1000.8 352.6 L1004.6 364.2 L996 375Z" fill="#4a4ad6" stroke="#160816" stroke-width=".8" stroke-linejoin="round"/><path d="M1005 355.4 L1021.6 356.4" stroke="#2a2ab8" stroke-width="1"/><path d="M988.5 377.2 L996 375 L1018 374.4 L1017.7 390.3 L994.6 389.5Z" fill="#168c16" stroke="#160816" stroke-width=".8" stroke-linejoin="round"/><path d="M994.6 389.5 L1017.7 390.3 L1015.4 396.5 L984.6 413.4 L978.5 414.2Z" fill="#1fa21f" stroke="#160816" stroke-width=".8" stroke-linejoin="round"/><path d="M972 401 L988.5 377.2 L994.6 389.5 L978.5 414.2Z" fill="#38e838" stroke="#160816" stroke-width=".8" stroke-linejoin="round"/><path d="M1014.4 372.2 L1019.6 372.8 L1019.4 376 L1014.4 375.4Z" fill="#1c2c9c" stroke="#0a0a2a" stroke-width=".4"/><path d="M1016.6 371.6 Q1009.4 372 1010.6 379.6 Q1012 385.4 1017.4 385" fill="none" stroke="#8cf08c" stroke-width="2.3"/><path d="M1014.6 379.8 L1021.6 378.8 L1019 384" stroke="#9cf49c" stroke-width="1.5" fill="none"/><path d="M995.4 398 L997.7 396.5 L1013 398 L1013.8 402.3 L1000 401.8Z" fill="#8e168e" stroke="#160816" stroke-width=".8" stroke-linejoin="round"/><path d="M1000 401.8 L1013.8 402.3 L1005.4 425.7 L993 425.7Z" fill="#e258e2" stroke="#160816" stroke-width=".8" stroke-linejoin="round"/><path d="M993 425.7 L1005.4 425.7 L1003.8 431 L988.5 431Z" fill="#c224c2" stroke="#160816" stroke-width=".8" stroke-linejoin="round"/><path d="M982.3 416.5 L995.4 398 L1000 401.8 L993 425.7 L988.5 431Z" fill="#f050f0" stroke="#160816" stroke-width=".8" stroke-linejoin="round"/><path d="M1002 404.4 L1009.6 404.8 L1003.4 423.6 L996.4 423.6Z M998 405.6 L991.2 426.4" fill="none" stroke="#2a062a" stroke-width=".7"/><circle cx="1005.2" cy="408.6" r=".9" fill="#2a062a"/><circle cx="1001.4" cy="419" r=".9" fill="#2a062a"/><circle cx="1009" cy="396.5" r="1.1" fill="#fff"/>
<circle cx="381" cy="468.5" r="8" fill="#9a9a9a" opacity=".55"/><circle cx="388" cy="464" r="6" fill="#aaaaaa" opacity=".5"/><circle cx="381.5" cy="474" r="4.2" fill="#7e7e7e" opacity=".5"/><path d="M365.5 480.3 L389.6 480.3" stroke="#22dd22" stroke-width="3"/><path d="M363.4 480.3 L369.4 476.4 L369.4 484.2Z" fill="#22dd22"/><path d="M389.6 480.6 L398.6 466" stroke="#1c1cc8" stroke-width="4" stroke-linecap="round"/><ellipse cx="399.5" cy="464.6" rx="4" ry="2.6" fill="#1c1cc8" transform="rotate(-32 399.5 464.6)"/><path d="M387 475.4 L380.6 459.4" stroke="#d42020" stroke-width="2.4"/><path d="M379.4 456.6 L384.2 460.2 L377.6 462.6Z" fill="#d42020"/><path d="M386 474 L383 466" stroke="#801010" stroke-width="1"/>
</g>
<text x="373.2" y="452.4" font-size="10.5" fill="#e02626" font-family="Liberation Sans,sans-serif">X</text><text x="400" y="457.8" font-size="10.5" fill="#2222cc" font-family="Liberation Sans,sans-serif">Z</text><text x="356.4" y="479.6" font-size="10.5" fill="#44dd44" font-family="Liberation Sans,sans-serif">Y</text>
</svg>
<div class="a" style="left:430.2px;top:226.0px;width:256.6px;height:104.2px;box-sizing:border-box;background:#fefee4;border:solid #38d038;border-width:2.4px 3px 3.2px 2.4px;border-radius:4px;box-shadow:inset 0 0 1.5px rgba(140,255,140,.9),0 0 1px rgba(30,140,30,.8);"></div>
<div class="a" style="left:556.9px;top:244.4px;width:1px;height:83px;background:#d6d6ca;"></div>
<div class="a" style="left:621.4px;top:244.4px;width:1px;height:83px;background:#d6d6ca;"></div>
<div class="a" style="left:667.0px;top:244.4px;width:1px;height:83px;background:#d6d6ca;"></div>
<div class="a" style="left:493.8px;top:244.4px;width:1px;height:83px;background:#d6d6ca;"></div>
<div class="a" style="left:494.3px;top:243.9px;width:189.7px;height:1px;background:#d6d6ca;"></div>
<div class="a" style="left:433px;top:260.6px;width:251px;height:1px;background:#d6d6ca;"></div>
<div class="a" style="left:433px;top:277.3px;width:251px;height:1px;background:#d6d6ca;"></div>
<div class="a" style="left:433px;top:294.0px;width:251px;height:1px;background:#d6d6ca;"></div>
<div class="a" style="left:433px;top:310.7px;width:251px;height:1px;background:#d6d6ca;"></div>
<span class="t" style="left:496.6px;top:231.5px;font-size:9.6px;line-height:9.6px;letter-spacing:-0.38px;color:#111;">Kreis 1</span>
<span class="t" style="left:520.8px;top:248.3px;font-size:9.6px;line-height:9.6px;letter-spacing:0.00px;color:#111;">Ist</span>
<span class="t" style="left:578.1px;top:248.3px;font-size:9.6px;line-height:9.6px;letter-spacing:0.00px;color:#111;">Sollw</span>
<span class="t" style="left:635.4px;top:248.3px;font-size:9.6px;line-height:9.6px;letter-spacing:-0.00px;color:#111;">Abw</span>
<span class="t" style="left:435.7px;top:265.0px;font-size:9.6px;line-height:9.6px;letter-spacing:0.15px;color:#111;">Mittelpunkt.x</span>
<span class="t" style="left:498.1px;top:265.0px;font-size:9.6px;line-height:9.6px;letter-spacing:-0.23px;color:#30d430;">2.892,304mm</span>
<span class="t" style="left:561.2px;top:265.0px;font-size:9.6px;line-height:9.6px;letter-spacing:-0.23px;color:#111;">2.892,304mm</span>
<span class="t" style="left:625.4px;top:265.0px;font-size:9.6px;line-height:9.6px;letter-spacing:-0.27px;color:#30d430;">0,000mm</span>
<span class="t" style="left:435.7px;top:281.7px;font-size:9.6px;line-height:9.6px;letter-spacing:0.15px;color:#111;">Mittelpunkt.y</span>
<span class="t" style="left:505.7px;top:281.7px;font-size:9.6px;line-height:9.6px;letter-spacing:-0.25px;color:#30d430;">510,000mm</span>
<span class="t" style="left:568.8px;top:281.7px;font-size:9.6px;line-height:9.6px;letter-spacing:-0.25px;color:#111;">510,000mm</span>
<span class="t" style="left:625.4px;top:281.7px;font-size:9.6px;line-height:9.6px;letter-spacing:-0.27px;color:#30d430;">0,000mm</span>
<span class="t" style="left:435.7px;top:298.4px;font-size:9.6px;line-height:9.6px;letter-spacing:0.15px;color:#111;">Mittelpunkt.z</span>
<span class="t" style="left:505.7px;top:298.4px;font-size:9.6px;line-height:9.6px;letter-spacing:-0.25px;color:#30d430;">622,267mm</span>
<span class="t" style="left:568.8px;top:298.4px;font-size:9.6px;line-height:9.6px;letter-spacing:-0.25px;color:#111;">622,267mm</span>
<span class="t" style="left:625.4px;top:298.4px;font-size:9.6px;line-height:9.6px;letter-spacing:-0.27px;color:#30d430;">0,000mm</span>
<span class="t" style="left:516.0px;top:315.1px;font-size:9.6px;line-height:9.6px;letter-spacing:-0.27px;color:#30d430;">0,026mm</span>
<span class="t" style="left:579.1px;top:315.1px;font-size:9.6px;line-height:9.6px;letter-spacing:-0.27px;color:#111;">0,000mm</span>
<span class="t" style="left:625.4px;top:315.1px;font-size:9.6px;line-height:9.6px;letter-spacing:-0.27px;color:#30d430;">0,026mm</span>
<div class="a" style="left:839.2px;top:221.2px;width:256.6px;height:104.2px;box-sizing:border-box;background:#fefee4;border:solid #38d038;border-width:2.4px 3px 3.2px 2.4px;border-radius:4px;box-shadow:inset 0 0 1.5px rgba(140,255,140,.9),0 0 1px rgba(30,140,30,.8);"></div>
<div class="a" style="left:965.9px;top:239.6px;width:1px;height:83px;background:#d6d6ca;"></div>
<div class="a" style="left:1030.4px;top:239.6px;width:1px;height:83px;background:#d6d6ca;"></div>
<div class="a" style="left:1076.0px;top:239.6px;width:1px;height:83px;background:#d6d6ca;"></div>
<div class="a" style="left:902.8px;top:239.6px;width:1px;height:83px;background:#d6d6ca;"></div>
<div class="a" style="left:903.3px;top:239.1px;width:189.7px;height:1px;background:#d6d6ca;"></div>
<div class="a" style="left:842px;top:255.8px;width:251px;height:1px;background:#d6d6ca;"></div>
<div class="a" style="left:842px;top:272.5px;width:251px;height:1px;background:#d6d6ca;"></div>
<div class="a" style="left:842px;top:289.2px;width:251px;height:1px;background:#d6d6ca;"></div>
<div class="a" style="left:842px;top:305.9px;width:251px;height:1px;background:#d6d6ca;"></div>
<span class="t" style="left:905.6px;top:226.7px;font-size:9.6px;line-height:9.6px;letter-spacing:-0.38px;color:#111;">Kreis 2</span>
<span class="t" style="left:929.8px;top:243.5px;font-size:9.6px;line-height:9.6px;letter-spacing:0.00px;color:#111;">Ist</span>
<span class="t" style="left:987.1px;top:243.5px;font-size:9.6px;line-height:9.6px;letter-spacing:0.00px;color:#111;">Sollw</span>
<span class="t" style="left:1044.4px;top:243.5px;font-size:9.6px;line-height:9.6px;letter-spacing:0.00px;color:#111;">Abw</span>
<span class="t" style="left:844.7px;top:260.2px;font-size:9.6px;line-height:9.6px;letter-spacing:0.15px;color:#111;">Mittelpunkt.x</span>
<span class="t" style="left:907.1px;top:260.2px;font-size:9.6px;line-height:9.6px;letter-spacing:-0.23px;color:#30d430;">2.892,304mm</span>
<span class="t" style="left:970.2px;top:260.2px;font-size:9.6px;line-height:9.6px;letter-spacing:-0.23px;color:#111;">2.892,304mm</span>
<span class="t" style="left:1034.4px;top:260.2px;font-size:9.6px;line-height:9.6px;letter-spacing:-0.27px;color:#30d430;">0,000mm</span>
<span class="t" style="left:844.7px;top:276.9px;font-size:9.6px;line-height:9.6px;letter-spacing:0.15px;color:#111;">Mittelpunkt.y</span>
<span class="t" style="left:911.7px;top:276.9px;font-size:9.6px;line-height:9.6px;letter-spacing:-0.24px;color:#30d430;">-509,875mm</span>
<span class="t" style="left:974.8px;top:276.9px;font-size:9.6px;line-height:9.6px;letter-spacing:-0.24px;color:#111;">-510,000mm</span>
<span class="t" style="left:1034.4px;top:276.9px;font-size:9.6px;line-height:9.6px;letter-spacing:-0.27px;color:#30d430;">0,125mm</span>
<span class="t" style="left:844.7px;top:293.6px;font-size:9.6px;line-height:9.6px;letter-spacing:0.15px;color:#111;">Mittelpunkt.z</span>
<span class="t" style="left:914.7px;top:293.6px;font-size:9.6px;line-height:9.6px;letter-spacing:-0.25px;color:#30d430;">622,267mm</span>
<span class="t" style="left:977.8px;top:293.6px;font-size:9.6px;line-height:9.6px;letter-spacing:-0.25px;color:#111;">622,267mm</span>
<span class="t" style="left:1034.4px;top:293.6px;font-size:9.6px;line-height:9.6px;letter-spacing:-0.27px;color:#30d430;">0,000mm</span>
<span class="t" style="left:925.0px;top:310.3px;font-size:9.6px;line-height:9.6px;letter-spacing:-0.27px;color:#30d430;">0,045mm</span>
<span class="t" style="left:988.1px;top:310.3px;font-size:9.6px;line-height:9.6px;letter-spacing:-0.27px;color:#111;">0,000mm</span>
<span class="t" style="left:1034.4px;top:310.3px;font-size:9.6px;line-height:9.6px;letter-spacing:-0.27px;color:#30d430;">0,045mm</span>
<div class="a" style="left:689.6px;top:360px;width:183.6px;height:55px;box-sizing:border-box;background:#fefee4;border:solid #38d038;border-width:2.4px 3px 3.2px 2.4px;border-radius:4px;box-shadow:inset 0 0 1.5px rgba(140,255,140,.9),0 0 1px rgba(30,140,30,.8);"></div>
<div class="a" style="left:716.1px;top:377.9px;width:1px;height:34px;background:#d6d6ca;"></div>
<div class="a" style="left:762.0px;top:377.9px;width:1px;height:34px;background:#d6d6ca;"></div>
<div class="a" style="left:807.5px;top:377.9px;width:1px;height:34px;background:#d6d6ca;"></div>
<div class="a" style="left:853.3px;top:377.9px;width:1px;height:34px;background:#d6d6ca;"></div>
<div class="a" style="left:716.6px;top:377.4px;width:154px;height:1px;background:#d6d6ca;"></div>
<div class="a" style="left:692.4px;top:394.6px;width:178px;height:1px;background:#d6d6ca;"></div>
<span class="t" style="left:718.4px;top:366.3px;font-size:9.6px;line-height:9.6px;letter-spacing:-0.46px;color:#111;">Ebene 1</span>
<span class="t" style="left:734.7px;top:382.4px;font-size:9.6px;line-height:9.6px;letter-spacing:-0.25px;color:#111;">Ist</span>
<span class="t" style="left:774.4px;top:382.4px;font-size:9.6px;line-height:9.6px;letter-spacing:-0.29px;color:#111;">Sollw</span>
<span class="t" style="left:822.1px;top:382.4px;font-size:9.6px;line-height:9.6px;letter-spacing:-0.47px;color:#111;">Abw</span>
<span class="t" style="left:719.4px;top:399.3px;font-size:9.6px;line-height:9.6px;letter-spacing:-0.27px;color:#30d430;">0,035mm</span>
<span class="t" style="left:767.1px;top:399.3px;font-size:9.6px;line-height:9.6px;letter-spacing:-0.27px;color:#111;">0,000mm</span>
<span class="t" style="left:811.8px;top:399.3px;font-size:9.6px;line-height:9.6px;letter-spacing:-0.27px;color:#30d430;">0,035mm</span>
<svg width="1240" height="780" viewBox="0 0 1240 780">
<circle cx="462.4" cy="245.5" r="8.2" fill="none" stroke="#c41c1c" stroke-width="1.7"/><circle cx="460.79999999999995" cy="237.7" r="1.9" fill="#e4e4e0" stroke="#a4a4a0" stroke-width=".5"/><circle cx="456.59999999999997" cy="251.7" r="1.9" fill="#e4e4e0" stroke="#a4a4a0" stroke-width=".5"/><circle cx="470.4" cy="248.1" r="1.9" fill="#e4e4e0" stroke="#a4a4a0" stroke-width=".5"/><circle cx="462.8" cy="319.7" r="4.4" fill="none" stroke="#111" stroke-width="1.1"/><path d="M670.8 253.9 L674.4 257.4 L681.4 248.0" fill="none" stroke="#55855c" stroke-width="2.6" stroke-linejoin="round"/><path d="M671.5999999999999 253.8 L674.5 256.4 L681.0999999999999 248.2" fill="none" stroke="#a9d6ae" stroke-width="1"/><path d="M670.8 270.59999999999997 L674.4 274.09999999999997 L681.4 264.7" fill="none" stroke="#55855c" stroke-width="2.6" stroke-linejoin="round"/><path d="M671.5999999999999 270.5 L674.5 273.09999999999997 L681.0999999999999 264.9" fill="none" stroke="#a9d6ae" stroke-width="1"/><path d="M670.8 287.29999999999995 L674.4 290.79999999999995 L681.4 281.4" fill="none" stroke="#55855c" stroke-width="2.6" stroke-linejoin="round"/><path d="M671.5999999999999 287.2 L674.5 289.79999999999995 L681.0999999999999 281.59999999999997" fill="none" stroke="#a9d6ae" stroke-width="1"/><path d="M670.8 304.0 L674.4 307.5 L681.4 298.1" fill="none" stroke="#55855c" stroke-width="2.6" stroke-linejoin="round"/><path d="M671.5999999999999 303.90000000000003 L674.5 306.5 L681.0999999999999 298.3" fill="none" stroke="#a9d6ae" stroke-width="1"/><path d="M670.8 320.7 L674.4 324.2 L681.4 314.8" fill="none" stroke="#55855c" stroke-width="2.6" stroke-linejoin="round"/><path d="M671.5999999999999 320.6 L674.5 323.2 L681.0999999999999 315.0" fill="none" stroke="#a9d6ae" stroke-width="1"/>
<circle cx="871.4" cy="240.7" r="8.2" fill="none" stroke="#c41c1c" stroke-width="1.7"/><circle cx="869.8" cy="232.89999999999998" r="1.9" fill="#e4e4e0" stroke="#a4a4a0" stroke-width=".5"/><circle cx="865.6" cy="246.89999999999998" r="1.9" fill="#e4e4e0" stroke="#a4a4a0" stroke-width=".5"/><circle cx="879.4" cy="243.29999999999998" r="1.9" fill="#e4e4e0" stroke="#a4a4a0" stroke-width=".5"/><circle cx="871.8" cy="314.9" r="4.4" fill="none" stroke="#111" stroke-width="1.1"/><path d="M1079.8 249.1 L1083.3999999999999 252.6 L1090.3999999999999 243.2" fill="none" stroke="#55855c" stroke-width="2.6" stroke-linejoin="round"/><path d="M1080.6 249.0 L1083.5 251.6 L1090.1 243.39999999999998" fill="none" stroke="#a9d6ae" stroke-width="1"/><path d="M1079.8 265.79999999999995 L1083.3999999999999 269.29999999999995 L1090.3999999999999 259.9" fill="none" stroke="#55855c" stroke-width="2.6" stroke-linejoin="round"/><path d="M1080.6 265.7 L1083.5 268.29999999999995 L1090.1 260.09999999999997" fill="none" stroke="#a9d6ae" stroke-width="1"/><path d="M1079.8 282.49999999999994 L1083.3999999999999 285.99999999999994 L1090.3999999999999 276.59999999999997" fill="none" stroke="#55855c" stroke-width="2.6" stroke-linejoin="round"/><path d="M1080.6 282.4 L1083.5 284.99999999999994 L1090.1 276.79999999999995" fill="none" stroke="#a9d6ae" stroke-width="1"/><path d="M1079.8 299.2 L1083.3999999999999 302.7 L1090.3999999999999 293.3" fill="none" stroke="#55855c" stroke-width="2.6" stroke-linejoin="round"/><path d="M1080.6 299.1 L1083.5 301.7 L1090.1 293.5" fill="none" stroke="#a9d6ae" stroke-width="1"/><path d="M1079.8 315.9 L1083.3999999999999 319.4 L1090.3999999999999 310.0" fill="none" stroke="#55855c" stroke-width="2.6" stroke-linejoin="round"/><path d="M1080.6 315.8 L1083.5 318.4 L1090.1 310.2" fill="none" stroke="#a9d6ae" stroke-width="1"/>
<path d="M695 388.6 L699.6 371.2 L713.7 370 L709 387.4Z" fill="#dd1818"/><path d="M697.6 407.4 L701.6 401 L710.4 400.6 L706.4 407Z" fill="none" stroke="#111" stroke-width="1"/><path d="M857 387.4 L860.6 390.9 L867.6 381.5" fill="none" stroke="#55855c" stroke-width="2.6" stroke-linejoin="round"/><path d="M857.8 387.3 L860.7 389.9 L867.3 381.7" fill="none" stroke="#a9d6ae" stroke-width="1"/><path d="M857 404.4 L860.6 407.9 L867.6 398.5" fill="none" stroke="#55855c" stroke-width="2.6" stroke-linejoin="round"/><path d="M857.8 404.3 L860.7 406.9 L867.3 398.7" fill="none" stroke="#a9d6ae" stroke-width="1"/>
<g opacity="1"><rect x="351" y="158" width="5" height="23" fill="#8a8a8a"/><rect x="352.6" y="160" width="1.2" height="20" fill="#6c6c6c"/><path d="M344 158 H357.5 V161 H348 L344 159.4Z" fill="#8a8a8a"/><path d="M345 167 H353 V170 H348Z" fill="#8a8a8a"/><rect x="355.5" y="165.5" width="3" height="2.6" fill="#8a8a8a"/></g><path d="M358.6 171 L358.6 180.6 L367.6 175.6Z" fill="#2f8a3c"/>
<g transform="translate(-94.4 129.6)"><path d="M473.5 35.8 L485 40.2" stroke="#aaa" stroke-width="1"/><path d="M476.7 30.900000000000002L480.09999999999997 34.300000000000004M480.09999999999997 30.900000000000002L476.7 34.300000000000004" stroke="#d02828" stroke-width="1.3"/><path d="M482.7 33.5L486.09999999999997 36.900000000000006M486.09999999999997 33.5L482.7 36.900000000000006" stroke="#d02828" stroke-width="1.3"/><path d="M488.2 29.900000000000002L491.59999999999997 33.300000000000004M491.59999999999997 29.900000000000002L488.2 33.300000000000004" stroke="#d02828" stroke-width="1.3"/><text x="472" y="46" font-size="9" fill="#111" font-family="Liberation Sans,sans-serif">R</text><circle cx="481.6" cy="44.1" r="1.6" fill="#1a7a2a"/><circle cx="492" cy="40.6" r="6.6" fill="none" stroke="#0d5c8d" stroke-width="1.3"/><circle cx="492" cy="40.6" r="3.9" fill="none" stroke="#2a6c98" stroke-width="1"/><path d="M488.2 38.6 Q490 35.6 493.2 35.8 Q496.6 36.4 497 40" fill="none" stroke="#d83030" stroke-width="1.3"/><path d="M487 37 L488 40.6 L490.6 38.6Z" fill="#d83030"/></g>
<g opacity="1"><rect x="422" y="158" width="5" height="23" fill="#8a8a8a"/><rect x="423.6" y="160" width="1.2" height="20" fill="#6c6c6c"/><path d="M415 158 H428.5 V161 H419 L415 159.4Z" fill="#8a8a8a"/><path d="M416 167 H424 V170 H419Z" fill="#8a8a8a"/><rect x="426.5" y="165.5" width="3" height="2.6" fill="#8a8a8a"/></g><path d="M436.2 164 V177" stroke="#2f8a3c" stroke-width="2.6"/><path d="M431.6 174 L436.2 180.8 L440.8 174Z" fill="#2f8a3c"/>
<path d="M453 157.5 V181.5" stroke="#555" stroke-width="2.2"/><path d="M451 160 h4 M451 164 h4 M451 168 h4 M451 172 h4 M451 176 h4 M451 180 h4" stroke="#444" stroke-width=".8"/><path d="M457 157.5 h8 l3 3 v13.5 h-11Z" fill="#e6e6e6" stroke="#555" stroke-width=".8"/><path d="M460.5 161 h8 l3 3 v13.5 h-11Z" fill="#e6e6e6" stroke="#555" stroke-width=".8"/><path d="M464 164.5 h8 l3 3 v13.5 h-11Z" fill="#e6e6e6" stroke="#555" stroke-width=".8"/><path d="M472.6 171 A3.4 3.4 0 1 0 472.6 176" fill="none" stroke="#2f8a3c" stroke-width="1.6"/><path d="M459.6 166 q-2 3 0 6 M463 170 q-2 3 0 6" stroke="#2f8a3c" stroke-width="1" fill="none"/>
<g opacity="0.45"><rect x="493" y="158" width="5" height="23" fill="#8a8a8a"/><rect x="494.6" y="160" width="1.2" height="20" fill="#6c6c6c"/><path d="M486 158 H499.5 V161 H490 L486 159.4Z" fill="#8a8a8a"/><path d="M487 167 H495 V170 H490Z" fill="#8a8a8a"/><rect x="497.5" y="165.5" width="3" height="2.6" fill="#8a8a8a"/></g><g opacity=".6"><path d="M510 171 A4.6 4.6 0 1 0 510.8 176" fill="none" stroke="#3a9a4a" stroke-width="1.4"/><path d="M508 178.6 l3.6 -.4 l-1.4 -3Z" fill="#3a9a4a"/></g>
<g opacity=".55"><path d="M522.5 170 L536 164.5 L546.7 170.5 L533 177Z" fill="#c4c4c4" stroke="#9a9a9a" stroke-width=".7"/><path d="M532.5 160 V169" stroke="#6a8ab0" stroke-width="1.2"/><path d="M530.4 167 l2.1 3 l2.1 -3Z" fill="#6a8ab0"/><path d="M546 176 L538 174.4" stroke="#6a8ab0" stroke-width="1.1"/><path d="M524 168 l5 4" stroke="#aaa" stroke-width=".8"/></g>
<g opacity=".75"><rect x="566" y="164.5" width="6" height="9.5" rx="1.5" fill="#9a9a9a" stroke="#6e6e6e" stroke-width=".6"/><path d="M563 163.5 V175" stroke="#3a78a8" stroke-width="1.2"/><path d="M561.4 166 l1.6 -2.6 l1.6 2.6 M561.4 172.4 l1.6 2.6 l1.6 -2.6" fill="none" stroke="#3a78a8" stroke-width=".9"/><path d="M566 163.5 h6" stroke="#ddd" stroke-width=".8"/></g>
<path d="M718.8 168 H725.2 L722 172Z" fill="#ededed"/><path d="M897.3 168 H903.7 L900.5 172Z" fill="#ededed"/><path d="M1074.8 168 H1081.2 L1078 172Z" fill="#ededed"/><path d="M798.4 189.6 H804 L801.2 192.8Z" fill="#4a5a7a"/>
<path d="M740 173 L745.5 170.4 L751 173 L745.5 175.8Z" fill="#c8a0a0" stroke="#b05050" stroke-width=".7"/><path d="M745.5 163 V170" stroke="#777" stroke-width="2.2"/><path d="M742.6 168.6 l2.9 3.4 l2.9 -3.4Z" fill="#777"/><path d="M916.4 165.6 V173.4" fill="none" stroke="#c2604c" stroke-width="1.2"/><path d="M916.4 173.2 H925.0" stroke="#4fa07c" stroke-width="1.2"/><path d="M916.4 173.2 L921.4 170.6" stroke="#9a9a9a" stroke-width=".8"/><path d="M924.4 170.2 h3.4 l-1.7 2.4Z" fill="#9c9c9c"/><path d="M1093.8 165.6 V173.4" fill="none" stroke="#c2604c" stroke-width="1.2"/><path d="M1093.8 173.2 H1102.3999999999999" stroke="#4fa07c" stroke-width="1.2"/><path d="M1093.8 173.2 L1098.8 170.6" stroke="#9a9a9a" stroke-width=".8"/><path d="M1101.8 170.2 h3.4 l-1.7 2.4Z" fill="#9c9c9c"/>
</svg>
<!-- p5_bottom -->
<div class="a" style="left:338px;top:536px;width:1px;height:240px;background:#8e8e8e;"></div>
<div class="a" style="left:338px;top:536px;width:902px;height:18px;background:linear-gradient(#d6d6d6,#cdcdcd 50%,#c6c6c6);border-top:1px solid #b4b4b4;box-sizing:border-box;"></div>
<span class="t" style="left:342.0px;top:540.6px;font-size:9.5px;line-height:9.5px;letter-spacing:0.12px;color:#222;">Merkmal-Informationen</span>
<div class="a" style="left:338px;top:554px;width:902px;height:2.5px;background:#f4f4f4;"></div>
<div class="a" style="left:340px;top:556px;width:900px;height:173.5px;background:#fff;border:1px solid #8c8c8c;border-right:none;box-sizing:border-box;"></div>
<div class="a" style="left:341px;top:557px;width:899px;height:19.5px;background:linear-gradient(#ffffff,#fbfbfb 50%,#f1f1f1);border-bottom:1px solid #d4d4d4;box-sizing:border-box;"></div>
<div class="a" style="left:658.3px;top:557px;width:75px;height:19.5px;background:linear-gradient(#f0f8fd,#dcedf8);border-left:1px solid #9fcbe6;border-right:1px solid #9fcbe6;border-bottom:1px solid #9fcbe6;box-sizing:border-box;"></div>
<div class="a" style="left:1109.4px;top:557px;width:75px;height:19.5px;background:linear-gradient(#f0f8fd,#dcedf8);border-left:1px solid #9fcbe6;border-right:1px solid #9fcbe6;border-bottom:1px solid #9fcbe6;box-sizing:border-box;"></div>
<div class="a" style="left:357px;top:558px;width:1px;height:17.5px;background:linear-gradient(#f4f4f4,#d9d9d9);"></div>
<div class="a" style="left:508px;top:558px;width:1px;height:17.5px;background:linear-gradient(#f4f4f4,#d9d9d9);"></div>
<div class="a" style="left:583.3px;top:558px;width:1px;height:17.5px;background:linear-gradient(#f4f4f4,#d9d9d9);"></div>
<div class="a" style="left:883.9px;top:558px;width:1px;height:17.5px;background:linear-gradient(#f4f4f4,#d9d9d9);"></div>
<div class="a" style="left:996.2px;top:558px;width:1px;height:17.5px;background:linear-gradient(#f4f4f4,#d9d9d9);"></div>
<span class="t" style="left:360.4px;top:562.0px;font-size:9.5px;line-height:9.5px;letter-spacing:0.10px;color:#222;">Merkmal/Etikett</span>
<span class="t" style="left:551.4px;top:562.0px;font-size:9.5px;line-height:9.5px;letter-spacing:-0.15px;color:#222;">Istwert</span>
<span class="t" style="left:621.2px;top:562.0px;font-size:9.5px;line-height:9.5px;letter-spacing:-0.17px;color:#222;">Sollwert</span>
<span class="t" style="left:709.0px;top:562.0px;font-size:9.5px;line-height:9.5px;letter-spacing:-0.03px;color:#222;">Abw.</span>
<span class="t" style="left:737.0px;top:562.0px;font-size:9.5px;line-height:9.5px;letter-spacing:0.00px;color:#222;">Sollwert-Merkmal</span>
<span class="t" style="left:947.0px;top:562.0px;font-size:9.5px;line-height:9.5px;letter-spacing:-0.03px;color:#222;">Untere Tol.</span>
<span class="t" style="left:1062.0px;top:562.0px;font-size:9.5px;line-height:9.5px;letter-spacing:-0.04px;color:#222;">Obere Tol.</span>
<span class="t" style="left:1138.0px;top:562.0px;font-size:9.5px;line-height:9.5px;letter-spacing:-0.06px;color:#222;">Außer Tol.</span>
<span class="t" style="left:1204.7px;top:562.0px;font-size:9.5px;line-height:9.5px;letter-spacing:0.01px;color:#222;">Toleranzfeld</span>
<div class="a" style="left:338px;top:729.5px;width:902px;height:26px;background:linear-gradient(#e9edf1,#e7ebef);"></div>
<div class="a" style="left:338px;top:755.2px;width:902px;height:1.2px;background:#a9adb3;"></div>
<div class="a" style="left:338px;top:756.4px;width:902px;height:19.6px;background:#e8ecf0;"></div>
<div class="a" style="left:346.7px;top:737.2px;width:11px;height:11px;background:linear-gradient(135deg,#dcdcdc,#ffffff);border:1px solid #8a8f96;box-sizing:border-box;"></div>
<span class="t" style="left:361.5px;top:738.4px;font-size:9.5px;line-height:9.5px;letter-spacing:-0.02px;color:#222;">"Nur Anzeigen" ausgewählt</span>
<span class="t" style="left:503.6px;top:738.4px;font-size:9.5px;line-height:9.5px;letter-spacing:-0.15px;color:#1b2f78;">Hilfe</span>
<div class="a" style="left:338.5px;top:755.5px;width:106px;height:19px;background:#fff;border:1px solid #9a9ea6;border-top:none;box-sizing:border-box;border-radius:0 0 2px 2px;"></div>
<div class="a" style="left:446px;top:757px;width:72.5px;height:17.5px;background:linear-gradient(#d9dde3,#cfd4dc);border:1px solid #a3a8b0;box-sizing:border-box;border-radius:0 0 2px 2px;"></div>
<span class="t" style="left:342.0px;top:760.6px;font-size:9.5px;line-height:9.5px;letter-spacing:0.08px;color:#111;">Merkmal-Informationen</span>
<span class="t" style="left:448.7px;top:760.6px;font-size:9.5px;line-height:9.5px;letter-spacing:-0.18px;color:#111;">Messergebnisse</span>
<div class="a" style="left:0px;top:776px;width:1240px;height:4px;background:linear-gradient(#9fb4c8 0,#3e6a8e 30%,#1d4468 100%);"></div>
<div class="a" style="left:870px;top:776px;width:90px;height:1.2px;background:linear-gradient(90deg,rgba(255,255,255,0),rgba(255,255,255,.8),rgba(255,255,255,0));"></div>
<div class="a" style="left:0px;top:777px;width:72px;height:3px;background:#0d1c2c;"></div>
<svg width="1240" height="780" viewBox="0 0 1240 780">
<path d="M692.4 561.2 L695.4 558 L698.4 561.2Z" fill="#9aa4ae"/><path d="M1143 561.2 L1146 558 L1149 561.2Z" fill="#9aa4ae"/>
<circle cx="495" cy="743.4" r="5.4" fill="#2d62b4" stroke="#1a3f86" stroke-width=".8"/><text x="492.4" y="746.6" font-size="8.4" font-weight="bold" fill="#fff" font-family="Liberation Sans,sans-serif">?</text>
<path d="M1236 541 V549 M1234 545.6 H1240 M1234 541.4 H1238.6 V545.6" fill="none" stroke="#333" stroke-width="1"/>
</svg>
</div>
</body>
</html>
